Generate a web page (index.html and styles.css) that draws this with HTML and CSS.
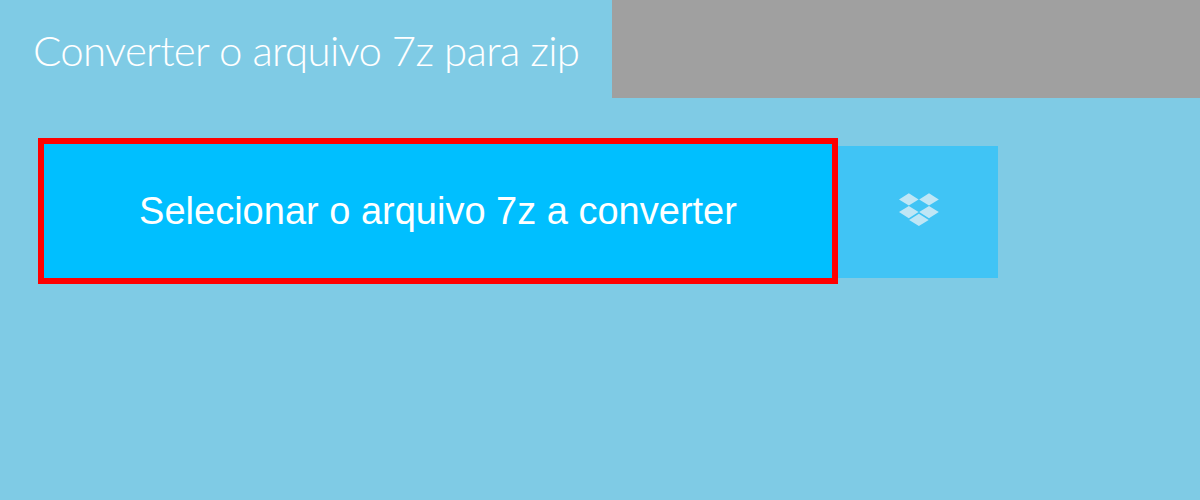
FILE: index.html
```html
<!DOCTYPE html>
<html lang="pt">
<head>
    <meta charset="UTF-8">
    <title>Converter o arquivo 7z para zip</title>
    <link rel="stylesheet" href="styles.css">
</head>
<body>
    <div class="header">
        <h1 class="title">Converter o arquivo 7z para zip</h1>
        <div class="ad-slot"></div>
    </div>
    <div class="upload-row">
        <button class="select-btn">Selecionar o arquivo 7z a converter</button>
        <div class="dropbox-btn">
            <svg class="dropbox-icon" viewBox="0 0 40 33" width="40" height="33">
                <path d="M9.8 0.2L19.6 6.4L9.8 12.6L0 6.4Z"/>
                <path d="M30 0.2L39.8 6.4L30 12.6L20.2 6.4Z"/>
                <path d="M9.8 13L19.6 19.1L9.8 25.2L0 19.1Z"/>
                <path d="M30 13L39.8 19.1L30 25.2L20.2 19.1Z"/>
                <path d="M19.9 20.8L29.7 26.9L19.9 33L10.1 26.9Z"/>
            </svg>
        </div>
    </div>
</body>
</html>
```

FILE: styles.css
```css
body {
    margin: 0;
    height: 500px;
    overflow: hidden;
    background-color: #7fcbe5;
    font-family: "Liberation Sans", Arial, sans-serif;
}

.header {
    display: flex;
    height: 98px;
}

.title {
    width: 612px;
    margin: 0;
    padding-left: 33px;
    box-sizing: border-box;
    font-family: Lato, sans-serif;
    font-size: 42px;
    font-weight: 300;
    letter-spacing: -0.7px;
    line-height: 100px;
    color: #ffffff;
    white-space: nowrap;
}

.ad-slot {
    flex: 1;
    background-color: #a0a0a0;
}

.upload-row {
    display: flex;
    align-items: flex-start;
    margin: 40px 0 0 38px;
}

.select-btn {
    width: 800px;
    height: 146px;
    box-sizing: border-box;
    border: 6px solid #ff0000;
    padding: 0;
    background-color: #00bfff;
    color: #ffffff;
    font-family: "Liberation Sans", Arial, sans-serif;
    font-size: 38px;
}

.dropbox-btn {
    display: flex;
    align-items: center;
    justify-content: center;
    width: 160px;
    height: 132px;
    margin-top: 8px;
    background-color: #40c4f5;
}

.dropbox-icon {
    margin: 0 0 5px 1px;
    fill: #bfe6f5;
}
```
